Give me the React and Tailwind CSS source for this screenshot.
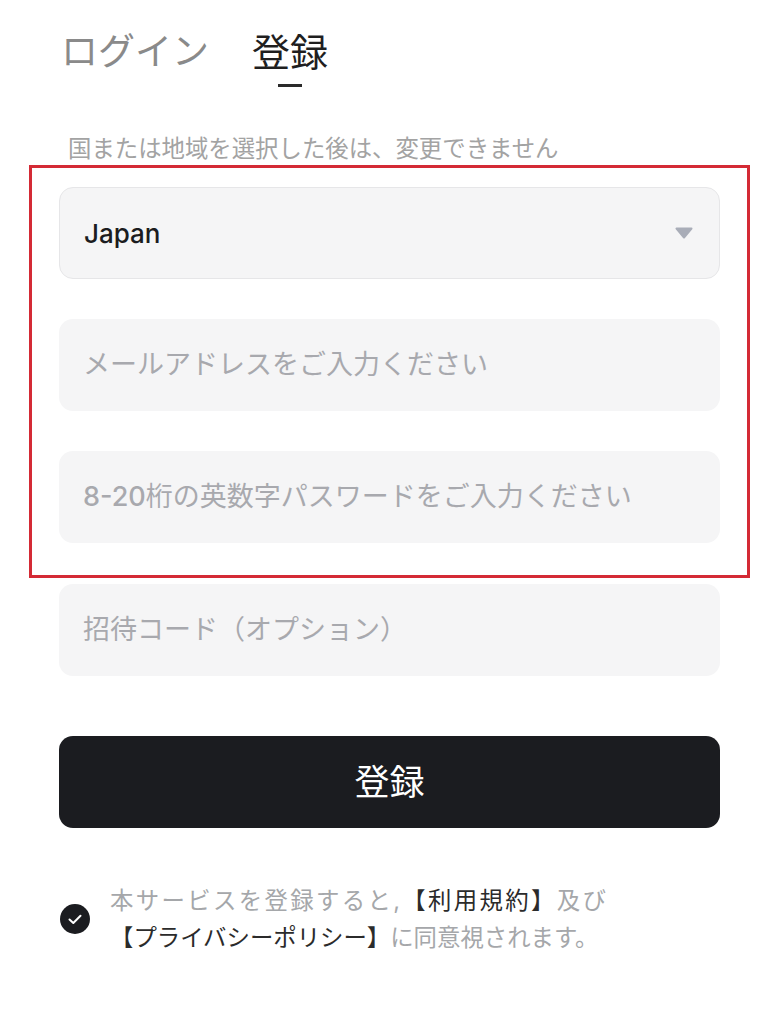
import React from "react";

const font = { fontFamily: 'Inter, "Noto Sans CJK JP", sans-serif' };

function Field({ children, className = "" }) {
  return (
    <div className={`h-[92px] w-full rounded-[14px] bg-[#f5f5f6] flex items-center px-[24px] ${className}`}>
      {children}
    </div>
  );
}

export default function App() {
  return (
    <div className="w-[779px] h-[1024px] bg-white overflow-hidden" style={font}>
      <div className="px-[59px]">
        {/* Tabs */}
        <div className="flex items-start gap-[43px] pt-[27px] pl-[2px]">
          <div className="text-[37px] leading-[50px] text-[#8a8a8a]">ログイン</div>
          <div className="flex flex-col items-center">
            <div className="text-[38px] leading-[50px] text-[#1f1f1f]">登録</div>
            <div className="mt-[7px] h-[3px] w-[24px] bg-[#2a2a2a]" />
          </div>
        </div>

        {/* Note */}
        <div className="mt-[47px] pl-[9px] text-[23.4px] leading-[30px] text-[#a3a3a3]">
          国または地域を選択した後は、変更できません
        </div>

        {/* Fields group with annotation box */}
        <div className="relative mt-[23px] flex flex-col gap-[40px]">
          <Field className="border border-[#e6e6e8]">
            <span className="flex-1 text-[26px] font-medium text-[#1b1c20]">Japan</span>
            <svg width="18" height="12" viewBox="0 0 18 12" className="mr-[2px]">
              <path d="M1.5 1.5 H16.5 L9 10.5 Z" fill="#a9adb8" stroke="#a9adb8" strokeWidth="2" strokeLinejoin="round" />
            </svg>
          </Field>
          <Field>
            <span className="text-[27px] text-[#a8a9ae]">メールアドレスをご入力ください</span>
          </Field>
          <Field>
            <span className="text-[27px] text-[#a8a9ae]">
              <span className="font-medium">8-20</span>桁の英数字パスワードをご入力ください
            </span>
          </Field>
          <div className="pointer-events-none absolute -left-[30px] -right-[30px] -top-[22px] -bottom-[35px] border-[3px] border-[#d42a35]" />
        </div>

        <Field className="mt-[41px]">
          <span className="text-[27px] text-[#a8a9ae]">招待コード（オプション）</span>
        </Field>

        {/* Button */}
        <button className="mt-[60px] h-[92px] w-full rounded-[14px] bg-[#1b1c20] text-white text-[35px] flex items-center justify-center">
          登録
        </button>

        {/* Agreement */}
        <div className="mt-[54px] flex items-center gap-[20px] pl-[1px]">
          <div className="h-[30px] w-[30px] shrink-0 rounded-full bg-[#1b1c20] flex items-center justify-center">
            <svg width="14" height="11" viewBox="0 0 14 11">
              <path d="M1.5 5.5 L5.3 9 L12.5 1.8" fill="none" stroke="#ffffff" strokeWidth="2" strokeLinecap="round" strokeLinejoin="round" />
            </svg>
          </div>
          <div className="text-[23.4px] leading-[37px] text-[#a5a7aa] whitespace-nowrap">
            <div className="w-[496px] text-justify [text-align-last:justify]">
              本サービスを登録すると,<span className="text-[#2b2b2b]">【利用規約】</span>及び
            </div>
            <div>
              <span className="text-[#2b2b2b]">【プライバシーポリシー】</span>に同意視されます。
            </div>
          </div>
        </div>
      </div>
    </div>
  );
}
